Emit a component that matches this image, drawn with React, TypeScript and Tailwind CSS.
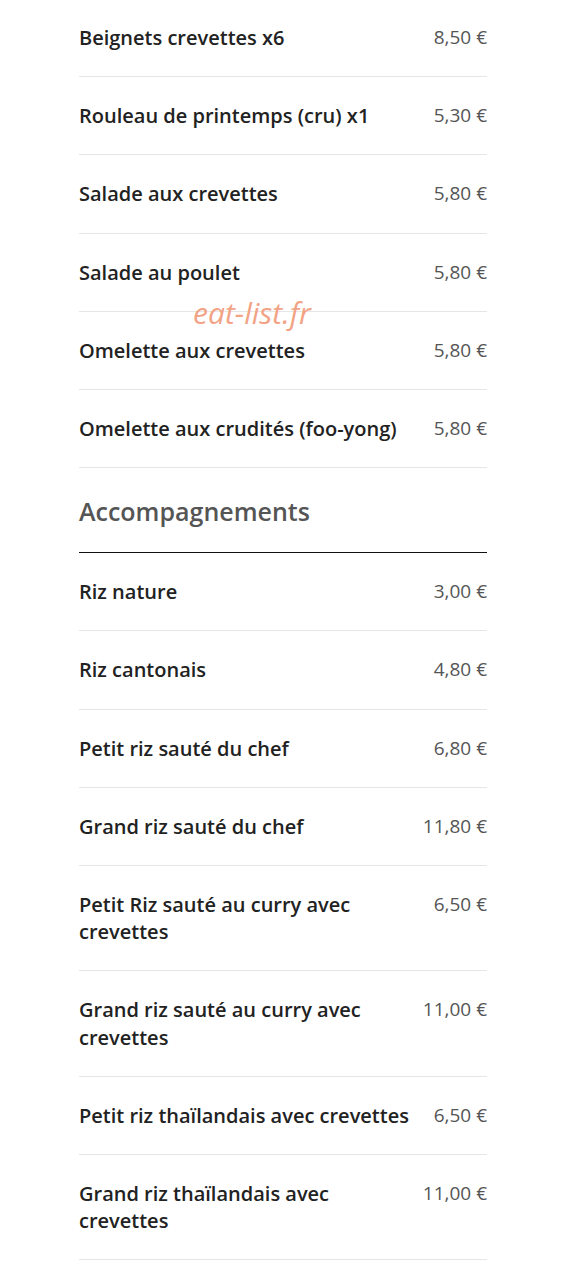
import React from 'react';

type Item = { name: string; price: string };

const starters: Item[] = [
  { name: 'Beignets crevettes x6', price: '8,50 €' },
  { name: 'Rouleau de printemps (cru) x1', price: '5,30 €' },
  { name: 'Salade aux crevettes', price: '5,80 €' },
  { name: 'Salade au poulet', price: '5,80 €' },
  { name: 'Omelette aux crevettes', price: '5,80 €' },
  { name: 'Omelette aux crudités (foo-yong)', price: '5,80 €' },
];

const sides: Item[] = [
  { name: 'Riz nature', price: '3,00 €' },
  { name: 'Riz cantonais', price: '4,80 €' },
  { name: 'Petit riz sauté du chef', price: '6,80 €' },
  { name: 'Grand riz sauté du chef', price: '11,80 €' },
  { name: 'Petit Riz sauté au curry avec crevettes', price: '6,50 €' },
  { name: 'Grand riz sauté au curry avec crevettes', price: '11,00 €' },
  { name: 'Petit riz thaïlandais avec crevettes', price: '6,50 €' },
  { name: 'Grand riz thaïlandais avec crevettes', price: '11,00 €' },
];

const Row = ({ item }: { item: Item }) => (
  <div className="flex items-start justify-between gap-4 py-[25px] border-b border-[#e6e6e6]">
    <span className="flex-1 text-[20px] leading-[27.2px] font-semibold text-[#222]">{item.name}</span>
    <span className="shrink-0 text-[19px] leading-[27.2px] font-medium text-[#555]">{item.price}</span>
  </div>
);

export default function App() {
  return (
    <div className="min-h-screen bg-white" style={{ fontFamily: '"Open Sans", "Noto Sans", sans-serif' }}>
      <div className="relative mx-[79px] -mt-px w-[408px]">
        {starters.map((item) => (
          <Row key={item.name} item={item} />
        ))}

        <h2 className="pt-[25px] pb-[23px] text-[25px] leading-[36px] font-semibold text-[#555] border-b border-[#111]">
          Accompagnements
        </h2>

        {sides.map((item) => (
          <Row key={item.name} item={item} />
        ))}

        {/* watermark */}
        <span className="absolute left-[114px] top-[294px] text-[30px] leading-[40px] italic text-[#f3a385] pointer-events-none">
          eat-list.fr
        </span>
      </div>
    </div>
  );
}
